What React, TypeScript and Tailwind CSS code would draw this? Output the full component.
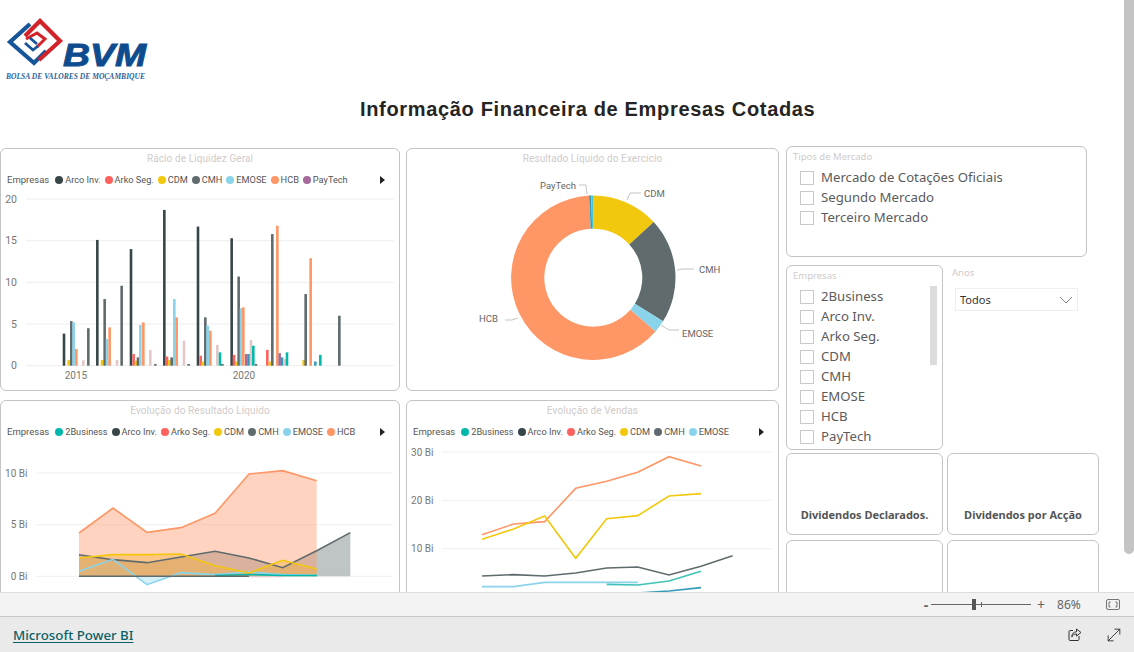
import React from 'react';
import { MoveDiagonal } from 'lucide-react';

const C = {
  teal: '#01b8aa',
  arco: '#374649',
  red: '#fd625e',
  cdm: '#f2c80f',
  cmh: '#5f6b6d',
  emose: '#8ad4eb',
  hcb: '#fe9666',
  pay: '#a66999',
  pale: '#e3c8c8',
  blue: '#3599b8',
};

type Bar = [number, number, string];

const bars: Bar[] = [
  [192, 3.85, C.arco], [206, 0.7, C.cdm], [214, 5.35, C.cmh], [221, 5.2, C.emose], [229, 2, C.hcb], [250, 0.65, C.pale], [265, 4.5, C.cmh],
  [292, 15.1, C.arco], [306, 0.7, C.cdm], [314, 8, C.cmh], [321, 3.2, C.emose], [329, 4.6, C.hcb], [351, 0.7, C.pale], [365, 9.6, C.cmh],
  [393, 14, C.arco], [401, 1.4, C.red], [408, 0.6, C.cdm], [414, 1, C.cmh], [421, 4.9, C.emose], [430, 5.2, C.hcb], [451, 1.9, C.pale], [466, 0.2, C.cmh],
  [493, 18.7, C.arco], [501, 1.1, C.red], [508, 0.7, C.cdm], [515, 1, C.cmh], [523, 8, C.emose], [530, 5.8, C.hcb], [552, 3, C.pale], [566, 0.2, C.cmh],
  [594, 16.7, C.arco], [602, 1.2, C.red], [608, 0.5, C.cdm], [616, 5.8, C.cmh], [623, 4.8, C.emose], [631, 4.2, C.hcb], [652, 2.5, C.pale], [660, 1.6, C.teal], [667, 0.2, C.cmh],
  [695, 15.3, C.arco], [702, 1.3, C.red], [709, 0.5, C.cdm], [716, 10.7, C.cmh], [723, 6.9, C.emose], [730, 7, C.hcb], [739, 1.4, C.pay], [746, 1.4, C.blue], [753, 3.1, C.pale], [760, 2.4, C.teal], [768, 0.2, C.cmh],
  [802, 1.9, C.red], [810, 0.5, C.cdm], [817, 15.8, C.cmh], [832, 16.8, C.hcb], [839, 1.5, C.pay], [846, 1, C.blue], [854, 0.8, C.pale], [861, 1.6, C.teal],
  [911, 0.7, C.cdm], [917, 8.6, C.cmh], [932, 12.9, C.hcb], [946, 0.5, C.blue], [961, 1.3, C.teal],
  [1018, 6, C.cmh],
];

// points below were read off a 3x crop, so divide by 3 and add the crop offset
const toPts = (xs: number[], ys: number[], ox: number, oy: number) =>
  ys.map((y, i) => `${ox + xs[i] / 3},${oy + y / 3}`).join(' ');

const areaX = [237, 339, 441, 543, 645, 747, 848, 950, 1051];
const salesX = [231, 326, 419, 512, 605, 698, 792, 888, 983];

const areas: { ys: number[]; color: string; op: number }[] = [
  { ys: [470, 485, 494, 477, 460, 480, 509, 458, 404], color: C.cmh, op: 0.4 },
  { ys: [520, 484, 560, 524, 530, 522, 530, 532], color: C.emose, op: 0.35 },
  { ys: [480, 470, 470, 468, 503, 525, 487, 513], color: C.cdm, op: 0.4 },
  { ys: [405, 330, 403, 389, 346, 228, 218, 248], color: C.hcb, op: 0.42 },
];

function polar(cx: number, cy: number, r: number, deg: number) {
  const a = ((deg - 90) * Math.PI) / 180;
  return [cx + r * Math.cos(a), cy + r * Math.sin(a)];
}

function Slice({ from, to, color }: { from: number; to: number; color: string }) {
  const cx = 593.3;
  const cy = 277.7;
  const [x1, y1] = polar(cx, cy, 82.2, from);
  const [x2, y2] = polar(cx, cy, 82.2, to);
  const [x3, y3] = polar(cx, cy, 49, to);
  const [x4, y4] = polar(cx, cy, 49, from);
  const large = to - from > 180 ? 1 : 0;
  return <path d={`M${x1} ${y1}A82.2 82.2 0 ${large} 1 ${x2} ${y2}L${x3} ${y3}A49 49 0 ${large} 0 ${x4} ${y4}Z`} fill={color} />;
}

function Legend({ items }: { items: [string, string][] }) {
  return (
    <div className="mt-1 flex h-4 items-center pl-[6px] pr-[14px] font-['Roboto',sans-serif] text-[#555]">
      <span className="mr-[6px] text-[9.5px]">Empresas</span>
      <div className="flex items-center gap-[4px] text-[9.2px]">
        {items.map(([name, color]) => (
          <span key={name} className="flex items-center gap-[2px] whitespace-nowrap">
            <span className="h-2 w-2 rounded-full" style={{ backgroundColor: color }} />
            {name}
          </span>
        ))}
      </div>
      <span className="ml-auto h-0 w-0 border-y-[4px] border-l-[5px] border-y-transparent border-l-[#222]" />
    </div>
  );
}

function ChartCard({ title, children }: { title: string; children: React.ReactNode }) {
  return (
    <div className="h-[243px] overflow-hidden rounded-[6px] border border-[#c4c4c4] bg-white">
      <div className="h-[19px] text-center font-['Roboto',sans-serif] text-[10px] leading-[19px] tracking-[0.1px] text-[#cfcbcb]">{title}</div>
      {children}
    </div>
  );
}

function Check({ label }: { label: string }) {
  return (
    <div className="flex h-5 items-center text-[13.2px] text-[#5b5b5b]">
      <span className="mr-[7px] h-[14px] w-[14px] shrink-0 border border-[#c9c9c9]" />
      {label}
    </div>
  );
}

function Logo() {
  return (
    <div className="h-[100px] w-[200px]">
      <svg viewBox="0 0 200 100" className="h-[100px] w-[200px]">
        <path d="M30 24 10 42l24 21 12-12" fill="none" stroke="#17559b" strokeWidth="4.2" />
        <path d="M25 36 40 21l20 20-21 19" fill="none" stroke="#d2232a" strokeWidth="4.2" />
        <path d="M26 39 37 33l8 6-8 8" fill="none" stroke="#d2232a" strokeWidth="3" />
        <path d="M25 43l8 7 5-4M30 38l7 6" fill="none" stroke="#17559b" strokeWidth="2.8" />
        <text x="63" y="66" fontFamily="'Liberation Sans',sans-serif" fontSize="31" fontStyle="italic" fontWeight="700" textLength="83" lengthAdjust="spacingAndGlyphs" fill="#0f4c8f" stroke="#0f4c8f" strokeWidth="0.9">BVM</text>
        <text x="6" y="79" fontFamily="'Liberation Serif',serif" fontSize="7.4" fontStyle="italic" fontWeight="700" textLength="139" lengthAdjust="spacingAndGlyphs" fill="#2a64a0">BOLSA DE VALORES DE MOÇAMBIQUE</text>
      </svg>
    </div>
  );
}

export default function App() {
  return (
    <div className="flex h-[652px] w-[1134px] flex-col overflow-hidden bg-white font-['Noto_Sans',sans-serif]">
      {/* Report canvas */}
      <div className="relative h-[592px] overflow-hidden">
        <div className="absolute right-0 top-0 h-[554px] w-[10px] rounded-b-[5px] bg-[#c4c4c4]" />

        <div className="h-[146px]">
          <Logo />
          <h1 className="ml-[360px] mt-[-2px] whitespace-nowrap font-['Liberation_Sans',sans-serif] text-[20px] font-bold leading-[22px] tracking-[0.67px] text-[#252423]">
            Informação Financeira de Empresas Cotadas
          </h1>
        </div>

        <div className="flex">
          <div className="grid w-[779px] grid-cols-[400px_373px] gap-x-[6px] gap-y-[9px] pt-[2px]">
            <ChartCard title="Rácio de Liquidez Geral">
              <Legend items={[['Arco Inv.', C.arco], ['Arko Seg.', C.red], ['CDM', C.cdm], ['CMH', C.cmh], ['EMOSE', C.emose], ['HCB', C.hcb], ['PayTech', C.pay]]} />
              <svg viewBox="1 189 398 202" className="block h-[202px] w-[398px] font-['Roboto',sans-serif]">
                {[200, 241.7, 283.3, 325, 366.7].map((y) => (
                  <line key={y} x1="26" x2="394" y1={y} y2={y} stroke="#eeeeee" />
                ))}
                {[['20', 200], ['15', 241.7], ['10', 283.3], ['5', 325], ['0', 366.7]].map(([t, y]) => (
                  <text key={t} x="17" y={Number(y) + 3.5} textAnchor="end" fontSize="10.5" fill="#777">{t}</text>
                ))}
                {bars.map(([x, v, color]) => (
                  <rect key={`${x}-${color}`} x={x / 3 - 1.3} y={366.7 - v * 8.33} width="2.6" height={v * 8.33} fill={color} />
                ))}
                <text x="76" y="379.5" textAnchor="middle" fontSize="10" fill="#777">2015</text>
                <text x="244" y="379.5" textAnchor="middle" fontSize="10" fill="#777">2020</text>
              </svg>
            </ChartCard>

            <ChartCard title="Resultado Líquido do Exercício">
              <svg viewBox="407 168 371 222" className="block h-[222px] w-[371px] font-['Roboto',sans-serif]">
                <Slice from={0} to={47.3} color={C.cdm} />
                <Slice from={47.3} to={122} color={C.cmh} />
                <Slice from={122} to={130.9} color={C.emose} />
                <Slice from={130.9} to={357} color={C.hcb} />
                <Slice from={357} to={358.6} color={C.blue} />
                <Slice from={358.6} to={360} color="#4cc3d0" />
                <g fill="none" stroke="#b5b5b5" strokeWidth="0.8">
                  <path d="M579 185h7l1 9" />
                  <path d="M627 200l3-7h11" />
                  <path d="M677 270l6-1h11" />
                  <path d="M661 325l8 5h10" />
                  <path d="M518 318l-6 2h-7" />
                </g>
                <g fontSize="9.5" fill="#666">
                  <text x="540" y="188.5">PayTech</text>
                  <text x="644" y="196.5">CDM</text>
                  <text x="699" y="272.5">CMH</text>
                  <text x="682" y="336.5">EMOSE</text>
                  <text x="479" y="321.5">HCB</text>
                </g>
              </svg>
            </ChartCard>

            <ChartCard title="Evolução do Resultado Líquido">
              <Legend items={[['2Business', C.teal], ['Arco Inv.', C.arco], ['Arko Seg.', C.red], ['CDM', C.cdm], ['CMH', C.cmh], ['EMOSE', C.emose], ['HCB', C.hcb]]} />
              <svg viewBox="1 440 398 202" className="block h-[202px] w-[398px] font-['Roboto',sans-serif]">
                {[473, 524.7, 576.3].map((y) => (
                  <line key={y} x1="36" x2="393" y1={y} y2={y} stroke="#f0f0f0" />
                ))}
                {[['10 Bi', 476.5], ['5 Bi', 528], ['0 Bi', 580]].map(([t, y]) => (
                  <text key={t} x="27.5" y={y} textAnchor="end" fontSize="10" fill="#777">{t}</text>
                ))}
                {areas.map(({ ys, color, op }) => (
                  <polygon
                    key={color}
                    points={`${areaX[0] / 3},576.3 ${toPts(areaX, ys, 0, 398)} ${areaX[ys.length - 1] / 3},576.3`}
                    fill={color}
                    fillOpacity={op}
                  />
                ))}
                {areas.map(({ ys, color }) => (
                  <polyline key={color} points={toPts(areaX, ys, 0, 398)} fill="none" stroke={color} strokeWidth={1.6} />
                ))}
                <polyline points="249,576.5 283,576.5" fill="none" stroke={C.pale} strokeWidth="1.6" />
                <polyline points="215,575.5 249,574.5 283,575.5 317,575.5" fill="none" stroke={C.teal} strokeWidth="1.6" />
                <polyline points="79,576.3 249,576.3" fill="none" stroke={C.cmh} strokeWidth="1.6" />
              </svg>
            </ChartCard>

            <ChartCard title="Evolução de Vendas">
              <Legend items={[['2Business', C.teal], ['Arco Inv.', C.arco], ['Arko Seg.', C.red], ['CDM', C.cdm], ['CMH', C.cmh], ['EMOSE', C.emose]]} />
              <svg viewBox="407 440 371 202" className="block h-[202px] w-[371px] font-['Roboto',sans-serif]">
                {[452, 500.3, 548.7].map((y) => (
                  <line key={y} x1="442" x2="772" y1={y} y2={y} stroke="#f0f0f0" />
                ))}
                {[['30 Bi', 455.5], ['20 Bi', 504], ['10 Bi', 552]].map(([t, y]) => (
                  <text key={t} x="433.5" y={y} textAnchor="end" fontSize="10" fill="#777">{t}</text>
                ))}
                <g fill="none" strokeWidth="1.6">
                  <polyline points={toPts(salesX, [566, 566, 553, 553, 553, 553], 405, 398)} stroke={C.emose} />
                  <polyline points={toPts(salesX.slice(4), [559, 561, 549, 520], 405, 398)} stroke="#3fc1b6" />
                  <polyline points={toPts(salesX.slice(5), [585, 579, 569], 405, 398)} stroke={C.blue} />
                  <polyline points={toPts(salesX, [534, 530, 534, 525, 510, 507, 531, 505, 473], 405, 398)} stroke={C.cmh} />
                  <polyline points={toPts(salesX, [410, 378, 371, 271, 250, 223, 176, 204], 405, 398)} stroke={C.hcb} />
                  <polyline points={toPts(salesX, [424, 393, 354, 481, 362, 353, 294, 287], 405, 398)} stroke={C.cdm} />
                </g>
              </svg>
            </ChartCard>
          </div>

          {/* Slicers and cards */}
          <div className="ml-[7px] w-[313px]">
            <div className="h-[111px] w-[301px] rounded-[6px] border border-[#c4c4c4] px-[6px] pt-[3px]">
              <div className="text-[9.5px] leading-[14px] text-[#cfcbcb]">Tipos de Mercado</div>
              <div className="ml-[7px] mt-[4px]">
                <Check label="Mercado de Cotações Oficiais" />
                <Check label="Segundo Mercado" />
                <Check label="Terceiro Mercado" />
              </div>
            </div>

            <div className="mt-2 flex">
              <div className="relative h-[185px] w-[157px] rounded-[6px] border border-[#c4c4c4] px-[6px] pt-[3px]">
                <div className="text-[9.5px] leading-[14px] text-[#cfcbcb]">Empresas</div>
                <div className="ml-[7px] mt-[4px]">
                  {['2Business', 'Arco Inv.', 'Arko Seg.', 'CDM', 'CMH', 'EMOSE', 'HCB', 'PayTech'].map((name) => (
                    <Check key={name} label={name} />
                  ))}
                </div>
                <div className="absolute left-[143px] top-[20px] h-[79px] w-[7px] bg-[#dcdcdc]" />
              </div>
              <div className="ml-[8px] w-[127px]">
                <div className="pl-[1px] pt-[1px] text-[9.5px] leading-[14px] text-[#cfcbcb]">Anos</div>
                <div className="ml-[4px] mt-[8px] flex h-[23px] w-[123px] items-center justify-between border border-[#eeeeee] pl-[4px] pr-[3px] pt-[1px] text-[11px] text-[#333]">
                  Todos
                  <svg width="16" height="10" viewBox="0 0 16 10" fill="none" stroke="#777" strokeWidth="0.9">
                    <path d="M2 2l6 6 6-6" />
                  </svg>
                </div>
              </div>
            </div>

            <div className="mt-[3px] grid grid-cols-[157px_152px] gap-x-[4px] gap-y-[5px]">
              {['Dividendos Declarados.', 'Dividendos por Acção', '', ''].map((label, i) => (
                <div key={i} className="flex h-[82px] items-end justify-center rounded-[6px] border border-[#c4c4c4] pb-[11px] text-[11px] font-bold text-[#555]">
                  {label}
                </div>
              ))}
            </div>
          </div>
        </div>
      </div>

      {/* Zoom bar */}
      <div className="flex h-6 items-center border-t border-[#dddddd] bg-[#f3f3f3] text-[#666]">
        <span className="ml-[921px] w-[10px] text-center text-[14px] font-bold leading-none">-</span>
        <div className="relative h-px w-[100px] bg-[#666]">
          <span className="absolute left-[41px] top-[-5px] h-[11px] w-[4px] bg-[#555]" />
          <span className="absolute left-[50px] top-[-2px] h-[5px] w-px bg-[#666]" />
        </div>
        <span className="ml-[6px] text-[14px] leading-none">+</span>
        <span className="ml-[12px] text-[12px]">86%</span>
        <svg className="ml-[25px]" width="14" height="11" viewBox="0 0 14 11" fill="none" stroke="#666" strokeWidth="0.9">
          <rect x="0.5" y="0.5" width="13" height="10" rx="1.5" />
          <path d="M4.5 3H3v5h1.5M9.5 3H11v5H9.5" />
        </svg>
      </div>

      {/* Footer */}
      <div className="flex h-9 items-center border-t border-[#c8c8c8] bg-[#eaeaea] pl-[13px]">
        <a className="pt-[2px] text-[13.3px] font-medium text-[#0b5f66] underline underline-offset-2">Microsoft Power BI</a>
        <svg className="ml-auto" width="14" height="14" viewBox="0 0 14 14" fill="none" stroke="#333" strokeWidth="1">
          <path d="M5 2.5H2a1.2 1.2 0 0 0-1 1v8a1.2 1.2 0 0 0 1 1h8a1.2 1.2 0 0 0 1-1V8" />
          <path d="M8.5 1 13 4.5 8.5 8V6C6 6 4.5 7 3.8 9c0-3.4 1.8-5 4.7-5.2z" />
        </svg>
        <MoveDiagonal className="ml-[22px] mr-[10px]" size={20} strokeWidth={1} color="#222" />
      </div>
    </div>
  );
}
